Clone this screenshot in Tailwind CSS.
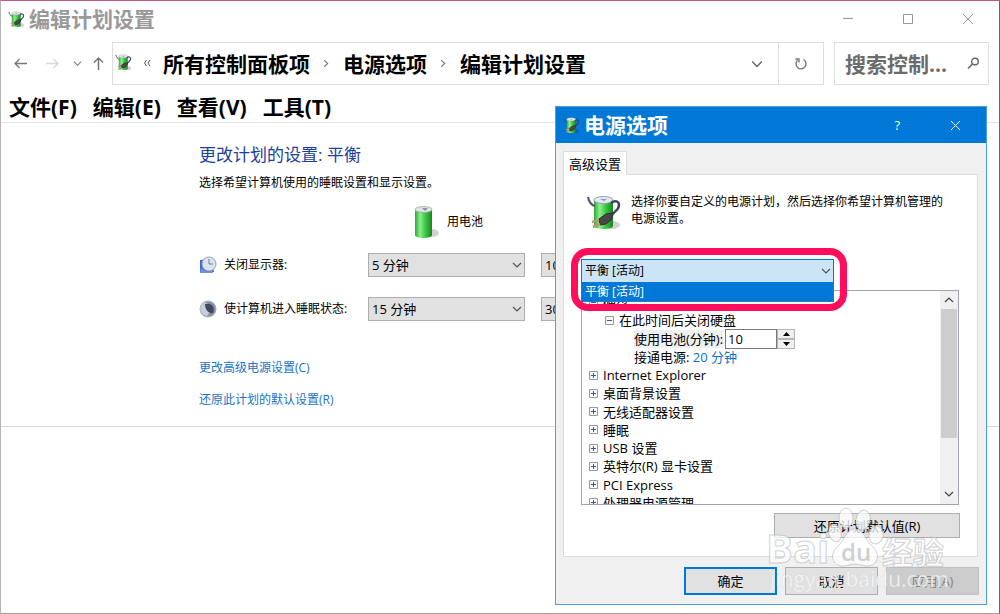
<!DOCTYPE html>
<html lang="zh-CN">
<head>
    <meta charset="UTF-8">
    <meta name="viewport" content="width=device-width, initial-scale=1.0">
    <title>编辑计划设置</title>
    <script src="https://cdn.jsdelivr.net/npm/@tailwindcss/browser@4"></script>
</head>

<body class="relative min-h-screen overflow-hidden bg-white text-black text-[12px] leading-[18px] font-['Open_Sans','Noto_Sans_CJK_SC',sans-serif]">

    <!--shared icons-->
    <svg class="absolute size-0">
        <defs>
            <linearGradient id="green" x1="0" x2="1" y1="0" y2="0">
                <stop offset="0" stop-color="#2fa838"/>
                <stop offset="0.3" stop-color="#8df08a"/>
                <stop offset="0.6" stop-color="#3fc747"/>
                <stop offset="1" stop-color="#15851f"/>
            </linearGradient>
            <symbol id="battery" viewBox="0 0 26 34">
                <ellipse cx="19" cy="28" rx="7" ry="4" fill="#000" opacity="0.18"/>
                <path d="M2 4v26c0 4 17 4 17 0V4z" fill="url(#green)"/>
                <ellipse cx="10.500" cy="4.500" rx="8.500" ry="3" fill="#dfe5e4" stroke="#8fae93" stroke-width="0.800"/>
                <path d="M9 3h6l-3 3z" fill="#8d8ea8"/>
            </symbol>
            <symbol id="plan" viewBox="0 0 34 36">
                <ellipse cx="25" cy="30" rx="8" ry="4" fill="#000" opacity="0.18"/>
                <path d="M7 5v26c0 4 19 4 19 0V5z" fill="url(#green)"/>
                <ellipse cx="16.500" cy="5" rx="9.500" ry="3.500" fill="#e4e9ee" stroke="#90a3ab"/>
                <path d="M13 4h7l-3 2z" fill="#9094b0"/>
                <path d="M1 2c1 5 3 8 7 9" fill="none" stroke="#4c4f66" stroke-width="2"/>
                <path d="M24 8c4-3 8-2 8 2 0 6-6 6-8 12" fill="none" stroke="#3f4560" stroke-width="2.500"/>
                <path d="M12 24l7-5 7-1-2 7-5 4-6 1z" fill="#474747" stroke="#2c2c2c"/>
                <path d="M12 25l-7 2M13 29l-7 3" stroke="#b79b6c" stroke-width="2.500"/>
            </symbol>
            <symbol id="down" viewBox="0 0 10 10">
                <path d="M1 3l4 4 4-4" fill="none" stroke="currentColor" stroke-width="1.200"/>
            </symbol>
            <symbol id="plus" viewBox="0 0 9 9">
                <path d="M0.500 0.500h8v8h-8z" fill="#fafafa" stroke="#989898"/>
                <path d="M2 4.500h5M4.500 2v5" stroke="#3a55a8"/>
            </symbol>
            <symbol id="minus" viewBox="0 0 9 9">
                <path d="M0.500 0.500h8v8h-8z" fill="#fafafa" stroke="#989898"/>
                <path d="M2 4.500h5" stroke="#3a55a8"/>
            </symbol>
        </defs>
    </svg>

    <!--main window-->
    <div class="min-h-screen border border-t-[#c4577c] border-l-[#b4b4b4] border-r-[#4f67a5] border-b-[#b5949c]">

        <!--title bar-->
        <header class="flex h-[41px] items-start justify-between pl-[7px] pt-[5px]">
            <div class="flex items-center gap-[4px]">
                <svg class="size-[17px]"><use href="#plan"/></svg>
                <h1 class="text-[21px] leading-[26px] font-bold text-[#999]">编辑计划设置</h1>
            </div>
            <div class="flex gap-[48px] pr-[25px] pt-[7px] text-[#999]">
                <button type="button" aria-label="最小化"><svg class="size-[12px]" viewBox="0 0 12 12"><path d="M1 5.500h10" stroke="currentColor"/></svg></button>
                <button type="button" aria-label="最大化"><svg class="size-[12px]" viewBox="0 0 12 12"><path d="M1.500 1.500h9v9h-9z" fill="none" stroke="currentColor"/></svg></button>
                <button type="button" aria-label="关闭"><svg class="size-[12px]" viewBox="0 0 12 12"><path d="M1 1l10 10M11 1L1 11" stroke="currentColor"/></svg></button>
            </div>
        </header>

        <!--address bar-->
        <nav class="flex h-[43px] items-stretch pr-[10px]">
            <div class="flex w-[111px] items-center pl-[12px] text-[#777]">
                <button type="button" aria-label="后退"><svg class="size-[15px]" viewBox="0 0 15 15"><path d="M14 7.500H2M6.500 3L2 7.500 6.500 12" fill="none" stroke="currentColor" stroke-width="1.300"/></svg></button>
                <button type="button" aria-label="前进" class="ml-[17px] text-[#d8d8d8]"><svg class="size-[15px]" viewBox="0 0 15 15"><path d="M1 7.500h12M8.500 3L13 7.500 8.500 12" fill="none" stroke="currentColor" stroke-width="1.300"/></svg></button>
                <button type="button" aria-label="历史" class="ml-[13px]"><svg class="size-[9px]"><use href="#down"/></svg></button>
                <button type="button" aria-label="向上" class="ml-[9px]"><svg class="size-[15px]" viewBox="0 0 15 15"><path d="M7.500 14V2M3 6.500L7.500 2 12 6.500" fill="none" stroke="currentColor" stroke-width="1.500"/></svg></button>
            </div>
            <div class="flex flex-1 items-center border border-[#dedede] text-[21px] font-bold">
                <svg class="ml-[2px] mb-[2px] size-[17px]"><use href="#plan"/></svg>
                <svg class="ml-[11px] mb-[2px] size-[8px] text-[#555]" viewBox="0 0 8 8"><path d="M3.500 1l-2 3 2 3M7 1L5 4l2 3" fill="none" stroke="currentColor"/></svg>
                <a href="#" class="ml-[12px]">所有控制面板项</a>
                <svg class="mx-[12px] size-[9px] text-[#777]" viewBox="0 0 8 8"><path d="M2 1l3 3-3 3" fill="none" stroke="currentColor"/></svg>
                <a href="#">电源选项</a>
                <svg class="mx-[12px] size-[9px] text-[#777]" viewBox="0 0 8 8"><path d="M2 1l3 3-3 3" fill="none" stroke="currentColor"/></svg>
                <a href="#">编辑计划设置</a>
                <button type="button" aria-label="展开" class="ml-auto mr-[15px] flex text-[#666]"><svg class="size-[12px]"><use href="#down"/></svg></button>
                <button type="button" aria-label="刷新" class="flex h-full w-[45px] items-center justify-center border-l border-[#dedede] text-[#777]">
                    <svg class="size-[14px]" viewBox="0 0 14 14"><path d="M9.500 2.500a5 5 0 1 1-6 .8M1.500 2h3.500v3.500" fill="none" stroke="currentColor" stroke-width="1.400"/></svg>
                </button>
            </div>
            <div class="ml-[10px] flex w-[155px] items-center border border-[#dedede]">
                <input type="text" aria-label="搜索" placeholder="搜索控制..." class="min-w-0 flex-1 pl-[10px] text-[21px] leading-[30px] font-bold outline-none placeholder:text-[#6b6b6b]">
                <svg class="mr-[8px] size-[13px] text-[#666]" viewBox="0 0 13 13"><circle cx="8" cy="4.500" r="3.300" fill="none" stroke="currentColor" stroke-width="1.400"/><path d="M5.500 7L1 11.500" stroke="currentColor" stroke-width="1.600"/></svg>
            </div>
        </nav>

        <!--menu-->
        <div class="flex h-[38px] items-center gap-[16px] border-b border-[#e4e4e4] pl-[8px] pt-[6px] text-[21px] leading-[30px] font-bold">
            <button type="button">文件(F)</button>
            <button type="button">编辑(E)</button>
            <button type="button">查看(V)</button>
            <button type="button">工具(T)</button>
        </div>

        <!--plan settings-->
        <main class="h-[304px] border-b border-[#d8d8d8] pl-[198px] pt-[20px]">
            <h2 class="text-[17px] leading-[24px] text-[#1a419c]">更改计划的设置: 平衡</h2>
            <p class="mt-[7px]">选择希望计算机使用的睡眠设置和显示设置。</p>
            <div class="mt-[13px] flex items-center gap-[8px] pl-[214px]">
                <svg class="h-[34px] w-[26px]"><use href="#battery"/></svg>
                <span>用电池</span>
            </div>

            <form class="mt-[14px] grid grid-cols-[169px_157px_157px] gap-y-[20px]">
                <div class="flex items-center gap-[7px]">
                    <svg class="size-[18px]" viewBox="0 0 18 18">
                        <path d="M1 4l11-1 3 13-14 1z" fill="#4169cf"/>
                        <circle cx="10" cy="8" r="7" fill="#d9e5ec" stroke="#92a2b2"/>
                        <path d="M10 3v5h4" fill="none" stroke="#6d7f95"/>
                        <path d="M2 12c3 3 7 4 11 3l1 2H1z" fill="#6f92e4"/>
                    </svg>
                    <label for="displayOff">关闭显示器:</label>
                </div>
                <div class="relative">
                    <select id="displayOff" class="h-[24px] w-full appearance-none border border-[#adadad] bg-[#e1e1e1] pl-[3px] text-[13px] leading-[18px]"><option>5 分钟</option></select>
                    <svg class="pointer-events-none absolute right-[3px] top-[7px] size-[10px] text-[#555]"><use href="#down"/></svg>
                </div>
                <select aria-label="关闭显示器 接通电源" class="ml-[16px] h-[24px] w-full appearance-none border border-[#adadad] bg-[#e1e1e1] pl-[3px] text-[13px] leading-[18px]"><option>10 分钟</option></select>

                <div class="flex items-center gap-[7px]">
                    <svg class="size-[18px]" viewBox="0 0 18 18">
                        <circle cx="9" cy="9" r="8" fill="#8791a4" stroke="#a9afb9"/>
                        <path d="M6 2c6 2 7 9 2 14-8-1-9-12-2-14z" fill="#c6cedb"/>
                        <path d="M6 4c8-1 10 4 8 9-3 1-8-2-8-9z" fill="#434960"/>
                    </svg>
                    <label for="sleepAfter">使计算机进入睡眠状态:</label>
                </div>
                <div class="relative">
                    <select id="sleepAfter" class="h-[24px] w-full appearance-none border border-[#adadad] bg-[#e1e1e1] pl-[3px] text-[13px] leading-[18px]"><option>15 分钟</option></select>
                    <svg class="pointer-events-none absolute right-[3px] top-[7px] size-[10px] text-[#555]"><use href="#down"/></svg>
                </div>
                <select aria-label="睡眠 接通电源" class="ml-[16px] h-[24px] w-full appearance-none border border-[#adadad] bg-[#e1e1e1] pl-[3px] text-[13px] leading-[18px]"><option>30 分钟</option></select>
            </form>

            <div class="mt-[38px] flex flex-col items-start gap-[14px] text-[#1a72c9]">
                <a href="#">更改高级电源设置(C)</a>
                <a href="#">还原此计划的默认设置(R)</a>
            </div>
        </main>
    </div>

    <!--power options dialog, floats over the main window-->
    <section class="absolute right-[13px] top-[106px] w-[432px] border border-[#4b9fe3] bg-[#f0f0f0] pb-[9px] text-[13px]">
        <header class="flex h-[36px] items-center bg-[#0078d7] pl-[7px] text-white">
            <svg class="size-[17px]"><use href="#plan"/></svg>
            <h2 class="ml-[4px] text-[21px] font-bold">电源选项</h2>
            <button type="button" aria-label="帮助" class="ml-auto">?</button>
            <button type="button" aria-label="关闭" class="ml-[50px] mr-[25px]"><svg class="size-[11px]" viewBox="0 0 11 11"><path d="M1 1l9 9M10 1l-9 9" stroke="currentColor"/></svg></button>
        </header>

        <div class="pl-[7px] pr-[8px] pt-[8px]">
            <button type="button" class="relative -mb-px block h-[24px] border border-b-0 border-[#dcdcdc] bg-white px-[5px]">高级设置</button>

            <div class="border border-[#dcdcdc] bg-white pb-[18px] pl-[17px] pr-[18px] pt-[18px]">
                <div class="flex gap-[10px] pl-[6px]">
                    <svg class="mt-[2px] h-[36px] w-[34px]"><use href="#plan"/></svg>
                    <p class="flex-1 text-[12px] leading-[17px]">选择你要自定义的电源计划，然后选择你希望计算机管理的<br>电源设置。</p>
                </div>

                <!--open plan list-->
                <div class="relative z-10 mt-[28px] w-[253px]">
                    <select aria-label="电源计划" class="block h-[24px] w-full appearance-none border border-[#0078d7] bg-[#cce4f7] pl-[3px] text-[12px] leading-[18px]"><option>平衡 [活动]</option></select>
                    <svg class="pointer-events-none absolute right-[3px] top-[7px] size-[10px] text-[#555]"><use href="#down"/></svg>
                    <ul class="absolute inset-x-0 top-[24px] border border-t-0 border-[#2a7ac0] bg-[#0078d7] pl-[3px] text-[12px] text-white">
                        <li>平衡 [活动]</li>
                    </ul>
                    <div class="absolute -bottom-[28px] -left-[10px] -right-[13px] -top-[11px] rounded-[17px] border-[7px] border-[#ff0f5b]"></div>
                </div>

                <!--settings tree-->
                <div class="mt-[7px] flex h-[215px] overflow-hidden border border-[#a0a4ae]">
                    <ul class="mt-[2px] flex h-[219px] flex-1 flex-col justify-between pl-[7px]">
                        <li class="flex items-center gap-[5px]"><svg class="size-[9px]"><use href="#minus"/></svg>硬盘</li>
                        <li class="flex items-center gap-[5px] pl-[16px]"><svg class="size-[9px]"><use href="#minus"/></svg>在此时间后关闭硬盘</li>
                        <li class="flex h-[18px] items-center pl-[45px]">
                            <label for="batteryMinutes" class="bg-[#f0f0f0]">使用电池(分钟):</label>
                            <input id="batteryMinutes" type="text" value="10" class="ml-[2px] h-[20px] w-[52px] border border-[#7a7a7a] bg-white pl-[2px] outline-none">
                            <div class="flex h-[20px] w-[18px] flex-col">
                                <button type="button" aria-label="增加" class="flex flex-1 items-center justify-center border border-[#b5b5b5] bg-[#f0f0f0]"><svg class="h-[4px] w-[7px]" viewBox="0 0 7 4"><path d="M0 4l3.500-4L7 4z"/></svg></button>
                                <button type="button" aria-label="减少" class="flex flex-1 items-center justify-center border border-[#b5b5b5] bg-[#f0f0f0]"><svg class="h-[4px] w-[7px]" viewBox="0 0 7 4"><path d="M0 0l3.500 4L7 0z"/></svg></button>
                            </div>
                        </li>
                        <li class="pl-[45px]">接通电源: <a href="#" class="text-[#0a6fd0]">20 分钟</a></li>
                        <li class="flex items-center gap-[5px]"><svg class="size-[9px]"><use href="#plus"/></svg>Internet Explorer</li>
                        <li class="flex items-center gap-[5px]"><svg class="size-[9px]"><use href="#plus"/></svg>桌面背景设置</li>
                        <li class="flex items-center gap-[5px]"><svg class="size-[9px]"><use href="#plus"/></svg>无线适配器设置</li>
                        <li class="flex items-center gap-[5px]"><svg class="size-[9px]"><use href="#plus"/></svg>睡眠</li>
                        <li class="flex items-center gap-[5px]"><svg class="size-[9px]"><use href="#plus"/></svg>USB 设置</li>
                        <li class="flex items-center gap-[5px]"><svg class="size-[9px]"><use href="#plus"/></svg>英特尔(R) 显卡设置</li>
                        <li class="flex items-center gap-[5px]"><svg class="size-[9px]"><use href="#plus"/></svg>PCI Express</li>
                        <li class="flex items-center gap-[5px]"><svg class="size-[9px]"><use href="#plus"/></svg>处理器电源管理</li>
                    </ul>
                    <div class="flex w-[18px] flex-col items-center bg-[#f0f0f0]">
                        <svg class="my-[4px] size-[10px] shrink-0 rotate-180 text-[#444]"><use href="#down"/></svg>
                        <div class="h-[129px] w-[16px] bg-[#cdcdcd]"></div>
                        <svg class="mb-[5px] mt-auto size-[10px] shrink-0 text-[#444]"><use href="#down"/></svg>
                    </div>
                </div>

                <button type="button" class="-mr-px ml-auto mt-[8px] block h-[25px] w-[186px] border border-[#adadad] bg-[#e1e1e1]">还原计划默认值(R)</button>
            </div>

            <div class="-mr-px mt-[10px] flex justify-end gap-[8px]">
                <button type="button" class="h-[28px] w-[93px] border-2 border-[#0078d7] bg-[#e1e1e1]">确定</button>
                <button type="button" class="h-[28px] w-[93px] border border-[#adadad] bg-[#e1e1e1]">取消</button>
                <button type="button" disabled class="h-[28px] w-[93px] border border-[#bfbfbf] bg-[#cccccc] text-[#838383]">应用(A)</button>
            </div>
        </div>
    </section>

    <!--watermark-->
    <svg class="pointer-events-none absolute right-[44px] top-[504px] h-[96px] w-[192px]" viewBox="0 0 192 96">
        <g fill="#fff" fill-opacity="0.750" stroke="#bbb" stroke-opacity="0.700" stroke-width="1">
            <ellipse cx="82" cy="14" rx="7" ry="10"/>
            <ellipse cx="99" cy="16" rx="7" ry="10" transform="rotate(12 99 16)"/>
            <ellipse cx="71" cy="29" rx="6" ry="9" transform="rotate(-15 71 29)"/>
            <ellipse cx="112" cy="31" rx="7" ry="9" transform="rotate(10 112 31)"/>
            <path d="M91 25c9 0 10 11 17 17 10 9 5 20-5 20-5 0-8-2-12-2s-7 2-12 2c-10 0-15-11-5-20 7-6 8-17 17-17z"/>
            <text x="2" y="59" class="text-[40px] font-bold">Bai</text>
            <text x="118" y="60" class="text-[31px] font-bold">经验</text>
        </g>
        <text x="77" y="57" class="text-[24px] font-semibold" fill="#c4c4c4" fill-opacity="0.800">du</text>
        <text x="6" y="83" class="text-[21px]" fill="#fff" fill-opacity="0.800" stroke="#bbb" stroke-opacity="0.400" stroke-width="0.500">jingyan.baidu.com</text>
    </svg>

</body>
</html>
